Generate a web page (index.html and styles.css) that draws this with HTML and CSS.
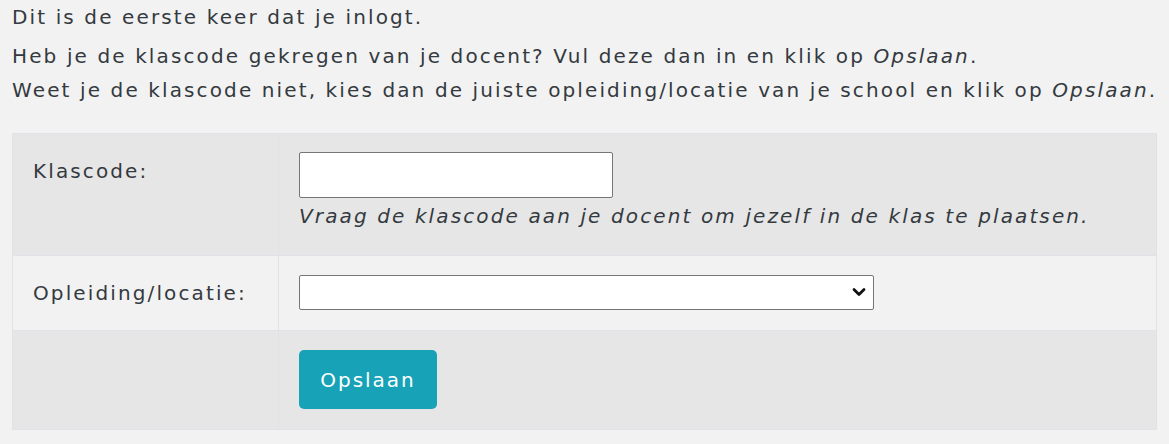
FILE: index.html
```html
<!DOCTYPE html>
<html lang="nl">
<head>
<meta charset="utf-8">
<title>Klascode</title>
<link rel="stylesheet" href="styles.css">
</head>
<body>
<div class="page">
  <p class="intro first">Dit is de eerste keer dat je inlogt.</p>
  <p class="intro">Heb je de klascode gekregen van je docent? Vul deze dan in en klik op <em>Opslaan</em>.<br>Weet je de klascode niet, kies dan de juiste opleiding/locatie van je school en klik op <em>Opslaan</em>.</p>
  <table class="form-table">
    <tr class="row-dark row-code">
      <th class="label">Klascode:</th>
      <td class="field">
        <input type="text" class="text-input">
        <div class="help">Vraag de klascode aan je docent om jezelf in de klas te plaatsen.</div>
      </td>
    </tr>
    <tr class="row-light">
      <th class="label">Opleiding/locatie:</th>
      <td class="field">
        <div class="select-wrap">
          <select class="select-input"><option></option></select>
          <svg class="chevron" width="14" height="10" viewBox="0 0 14 10" aria-hidden="true"><path d="M2 2.5 L7 7.5 L12 2.5" fill="none" stroke="#111" stroke-width="2.8" stroke-linecap="round" stroke-linejoin="round"/></svg>
        </div>
      </td>
    </tr>
    <tr class="row-dark">
      <th class="label"></th>
      <td class="field">
        <button class="btn" type="button">Opslaan</button>
      </td>
    </tr>
  </table>
</div>
</body>
</html>
```
FILE: styles.css
```css
html, body {
  margin: 0;
  padding: 0;
  background: #f2f2f2;
}
body {
  font-family: "DejaVu Sans", "Liberation Sans", sans-serif;
  font-size: 20px;
  line-height: 34px;
  letter-spacing: 2.12px;
  color: #343a40;
}
.page {
  padding: 0 12px;
}
.intro {
  margin: 0;
  white-space: nowrap;
}
.intro.first {
  margin-bottom: 5px;
}
.intro em {
  font-style: italic;
}
.form-table {
  margin-top: 26px;
  width: 1145px;
  border-collapse: collapse;
  border: 1px solid #dfe2e6;
}
.form-table th,
.form-table td {
  border: 1px solid #dfe2e6;
  padding: 20px 20px 20px;
  vertical-align: top;
  text-align: left;
  font-weight: normal;
}
.form-table th {
  width: 225px;
}
.form-table td {
  padding-top: 19px;
}
.row-dark {
  background: #e6e6e6;
}
.row-light {
  background: #f2f2f2;
}
.row-code td {
  padding-top: 18px;
  padding-bottom: 22px;
}
.text-input {
  display: block;
  box-sizing: border-box;
  width: 314px;
  height: 46px;
  margin: 0;
  border: 1px solid #767676;
  border-radius: 2px;
  background: #fff;
}
.help {
  font-style: italic;
  margin-top: 1px;
}
.select-wrap {
  position: relative;
  width: 575px;
}
.select-input {
  display: block;
  box-sizing: border-box;
  width: 575px;
  height: 35px;
  margin: 0;
  border: 1px solid #767676;
  border-radius: 2px;
  background: #fff;
  -webkit-appearance: none;
  appearance: none;
}
.chevron {
  position: absolute;
  right: 8px;
  top: 12px;
  pointer-events: none;
}
.btn {
  display: block;
  box-sizing: border-box;
  width: 138px;
  height: 59px;
  padding: 0;
  border: 0;
  border-radius: 5px;
  background: #17a2b8;
  color: #fff;
  font-family: inherit;
  font-size: 20px;
  letter-spacing: 2px;
}
```
